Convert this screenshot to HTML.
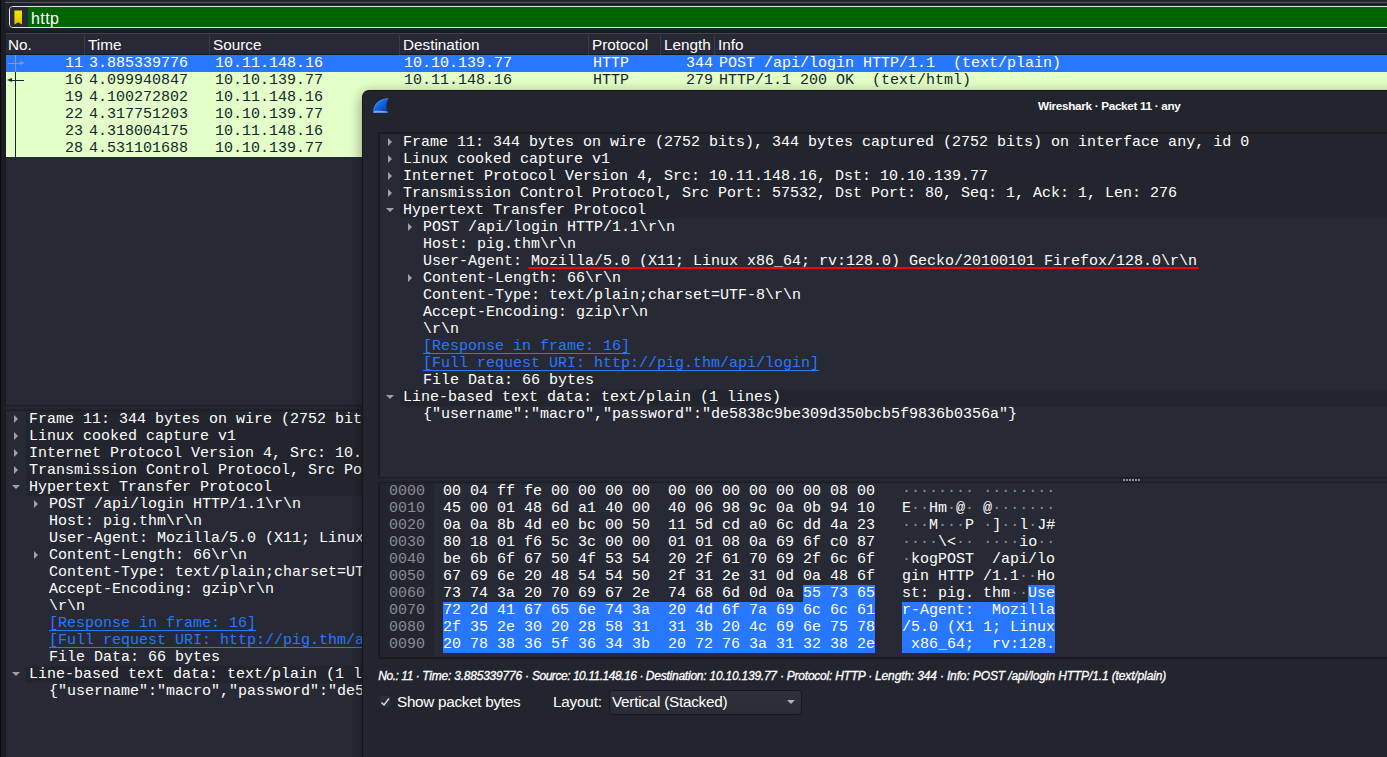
<!DOCTYPE html><html><head><meta charset="utf-8"><title>Wireshark</title><style>
*{box-sizing:border-box;margin:0;padding:0}
html,body{width:1387px;height:757px;overflow:hidden;background:#23252e;}
body{position:relative;font-family:"Liberation Sans",sans-serif;color:#fff;font-size:15px}
.abs{position:absolute}
.mono{font-family:"Liberation Mono",monospace;font-size:15px;line-height:17px;white-space:pre}
.row{position:absolute;left:0;right:0;height:17px}
.hdr span{position:absolute;top:0;line-height:21px;font-size:15.3px;color:#fff}
.sep{position:absolute;top:1px;width:1px;height:20px;background:#3a3c47}
.cell{position:absolute;top:0}
  .tri-r{position:absolute;width:0;height:0;border-left:4px solid #a0a1a7;border-top:4px solid transparent;border-bottom:4px solid transparent}
.tri-d{position:absolute;width:0;height:0;border-top:4.5px solid #a0a1a7;border-left:4px solid transparent;border-right:4px solid transparent}
.link{color:#2777ff;text-decoration:underline;text-decoration-skip-ink:none;text-underline-offset:3px;text-decoration-thickness:1px}
.dim{color:#8a8c95}
.hl{background:#2777ff}
</style></head><body>
<div class="abs" style="left:0;top:0;width:5px;height:757px;background:#1c1d24;border-left:1px solid #0a0a0d"></div>
<div class="abs" style="left:5px;top:28px;right:0;height:5px;background:linear-gradient(#1e2028,#191a21)"></div>
<div class="abs" style="left:5px;top:2px;right:0;height:1px;background:#52545d"></div>
<div class="abs" style="left:5px;top:3px;right:0;height:3px;background:#1f2129"></div>
<div class="abs" style="left:9px;top:6px;width:1400px;height:22px;border:1px solid #e4dfe2;border-radius:4px;background:#006400;overflow:hidden"><div class="abs" style="left:0;top:0;width:18px;height:20px;background:#272a34"></div><svg class="abs" style="left:4px;top:2.6px" width="9" height="15" viewBox="0 0 9 15"><defs><linearGradient id="bk" x1="0" y1="0" x2="0" y2="1"><stop offset="0" stop-color="#f7e400"/><stop offset="1" stop-color="#dcc400"/></linearGradient></defs><path d="M0.4 0.5H8V14.5L4.2 12.2L0.4 14.5Z" fill="url(#bk)"/></svg><span class="abs" style="left:21px;top:0.7px;line-height:21px;font-size:16px;letter-spacing:0.4px;color:#fff">http</span></div>
<div class="abs" style="left:5px;top:32px;right:-2px;height:374px;border:1px solid #1a1c23;background:#272a34"></div>
<div class="abs hdr" style="left:6px;top:33px;right:0;height:22px;background:#272a34;border-top:1px solid #40424c;border-bottom:1px solid #17181d">
<span style="left:2px">No.</span>
<span style="left:82px">Time</span>
<span style="left:207px">Source</span>
<span style="left:397px">Destination</span>
<span style="left:586px">Protocol</span>
<span style="left:658px">Length</span>
<span style="left:712px">Info</span>
<div class="sep" style="left:78px"></div>
<div class="sep" style="left:203px"></div>
<div class="sep" style="left:393px"></div>
<div class="sep" style="left:582px"></div>
<div class="sep" style="left:654px"></div>
<div class="sep" style="left:708px"></div>
</div>
<div class="row mono" style="left:6px;top:55px;background:#2777ff;color:#fff">
<span class="cell" style="left:59px;width:18px;text-align:right">11</span>
<span class="cell" style="left:83px">3.885339776</span>
<span class="cell" style="left:209px">10.11.148.16</span>
<span class="cell" style="left:398px">10.10.139.77</span>
<span class="cell" style="left:587px">HTTP</span>
<span class="cell" style="left:655px;width:52px;text-align:right">344</span>
<span class="cell" style="left:713px">POST /api/login HTTP/1.1  (text/plain)</span>
</div>
<div class="row mono" style="left:6px;top:72px;background:#e4ffc7;color:#12272e">
<span class="cell" style="left:59px;width:18px;text-align:right">16</span>
<span class="cell" style="left:83px">4.099940847</span>
<span class="cell" style="left:209px">10.10.139.77</span>
<span class="cell" style="left:398px">10.11.148.16</span>
<span class="cell" style="left:587px">HTTP</span>
<span class="cell" style="left:655px;width:52px;text-align:right">279</span>
<span class="cell" style="left:713px">HTTP/1.1 200 OK  (text/html)</span>
</div>
<div class="row mono" style="left:6px;top:89px;background:#e4ffc7;color:#12272e">
<span class="cell" style="left:59px;width:18px;text-align:right">19</span>
<span class="cell" style="left:83px">4.100272802</span>
<span class="cell" style="left:209px">10.11.148.16</span>
<span class="cell" style="left:398px">10.10.139.77</span>
<span class="cell" style="left:587px">HTTP</span>
<span class="cell" style="left:655px;width:52px;text-align:right">386</span>
<span class="cell" style="left:713px">GET /dashboard HTTP/1.1 </span>
</div>
<div class="row mono" style="left:6px;top:106px;background:#e4ffc7;color:#12272e">
<span class="cell" style="left:59px;width:18px;text-align:right">22</span>
<span class="cell" style="left:83px">4.317751203</span>
<span class="cell" style="left:209px">10.10.139.77</span>
<span class="cell" style="left:398px">10.11.148.16</span>
<span class="cell" style="left:587px">HTTP</span>
<span class="cell" style="left:655px;width:52px;text-align:right">1514</span>
<span class="cell" style="left:713px">HTTP/1.1 200 OK  (text/html)</span>
</div>
<div class="row mono" style="left:6px;top:123px;background:#e4ffc7;color:#12272e">
<span class="cell" style="left:59px;width:18px;text-align:right">23</span>
<span class="cell" style="left:83px">4.318004175</span>
<span class="cell" style="left:209px">10.11.148.16</span>
<span class="cell" style="left:398px">10.10.139.77</span>
<span class="cell" style="left:587px">HTTP</span>
<span class="cell" style="left:655px;width:52px;text-align:right">344</span>
<span class="cell" style="left:713px">GET /favicon.ico HTTP/1.1 </span>
</div>
<div class="row mono" style="left:6px;top:140px;background:#e4ffc7;color:#12272e">
<span class="cell" style="left:59px;width:18px;text-align:right">28</span>
<span class="cell" style="left:83px">4.531101688</span>
<span class="cell" style="left:209px">10.10.139.77</span>
<span class="cell" style="left:398px">10.11.148.16</span>
<span class="cell" style="left:587px">HTTP</span>
<span class="cell" style="left:655px;width:52px;text-align:right">552</span>
<span class="cell" style="left:713px">HTTP/1.1 404 Not Found  (text/html)</span>
</div>
<div class="abs" style="left:15px;top:55px;width:1px;height:17px;background:#8f96a3"></div>
<div class="abs" style="left:8px;top:63px;width:12px;height:1px;background:#8f96a3"></div>
<div class="tri-r" style="left:20px;top:61px;border-left-color:#8f96a3;border-top-width:2.5px;border-bottom-width:2.5px;border-left-width:5.5px"></div>
<div class="abs" style="left:15px;top:72px;width:1px;height:85px;background:#12272e"></div>
<div class="abs" style="left:11px;top:80px;width:13px;height:1px;background:#12272e"></div>
<div class="abs" style="left:7px;top:78px;width:0;height:0;border-right:5px solid #12272e;border-top:2.5px solid transparent;border-bottom:2.5px solid transparent"></div>
<div class="abs" style="left:5px;top:410px;right:-2px;height:360px;border:1px solid #1a1c23;background:#272a34"></div>
<div class="abs" style="left:6px;top:411px;width:1400px;height:289px;overflow:hidden">
<div class="abs" style="left:20px;top:0px;right:0;height:17px;background:#23252e"></div>
<div class="tri-r" style="left:8px;top:4px"></div>
<span class="abs mono" style="left:23px;top:0px">Frame 11: 344 bytes on wire (2752 bits), 344 bytes captured (2752 bits) on interface any, id 0</span>
<div class="abs" style="left:20px;top:17px;right:0;height:17px;background:#23252e"></div>
<div class="tri-r" style="left:8px;top:21px"></div>
<span class="abs mono" style="left:23px;top:17px">Linux cooked capture v1</span>
<div class="abs" style="left:20px;top:34px;right:0;height:17px;background:#23252e"></div>
<div class="tri-r" style="left:8px;top:38px"></div>
<span class="abs mono" style="left:23px;top:34px">Internet Protocol Version 4, Src: 10.11.148.16, Dst: 10.10.139.77</span>
<div class="abs" style="left:20px;top:51px;right:0;height:17px;background:#23252e"></div>
<div class="tri-r" style="left:8px;top:55px"></div>
<span class="abs mono" style="left:23px;top:51px">Transmission Control Protocol, Src Port: 57532, Dst Port: 80, Seq: 1, Ack: 1, Len: 276</span>
<div class="abs" style="left:20px;top:68px;right:0;height:17px;background:#23252e"></div>
<div class="tri-d" style="left:6px;top:74px"></div>
<span class="abs mono" style="left:23px;top:68px">Hypertext Transfer Protocol</span>
<div class="tri-r" style="left:28px;top:89px"></div>
<span class="abs mono" style="left:43px;top:85px">POST /api/login HTTP/1.1\r\n</span>
<span class="abs mono" style="left:43px;top:102px">Host: pig.thm\r\n</span>
<span class="abs mono" style="left:43px;top:119px">User-Agent: Mozilla/5.0 (X11; Linux x86_64; rv:128.0) Gecko/20100101 Firefox/128.0\r\n</span>
<div class="tri-r" style="left:28px;top:140px"></div>
<span class="abs mono" style="left:43px;top:136px">Content-Length: 66\r\n</span>
<span class="abs mono" style="left:43px;top:153px">Content-Type: text/plain;charset=UTF-8\r\n</span>
<span class="abs mono" style="left:43px;top:170px">Accept-Encoding: gzip\r\n</span>
<span class="abs mono" style="left:43px;top:187px">\r\n</span>
<span class="abs mono link" style="left:43px;top:204px">[Response in frame: 16]</span>
<span class="abs mono link" style="left:43px;top:221px">[Full request URI: http://pig.thm/api/login]</span>
<span class="abs mono" style="left:43px;top:238px">File Data: 66 bytes</span>
<div class="abs" style="left:20px;top:255px;right:0;height:17px;background:#23252e"></div>
<div class="tri-d" style="left:6px;top:261px"></div>
<span class="abs mono" style="left:23px;top:255px">Line-based text data: text/plain (1 lines)</span>
<span class="abs mono" style="left:43px;top:272px">{&quot;username&quot;:&quot;macro&quot;,&quot;password&quot;:&quot;de5838c9be309d350bcb5f9836b0356a&quot;}</span>
</div>
<div class="abs" style="left:362px;top:90px;width:1500px;height:700px;background:#23252e;border-radius:7px 7px 0 0;border-left:1px solid #14151b;border-top:1px solid #111217;box-shadow:0 3px 14px rgba(0,0,0,.4)">
</div>
<svg class="abs" style="left:373px;top:98px" width="16.6" height="15.3" viewBox="0 0 17 16" preserveAspectRatio="none"><defs><linearGradient id="fg" x1="0" y1="0" x2="1" y2="1"><stop offset="0" stop-color="#3a9aff"/><stop offset="0.45" stop-color="#1268e8"/><stop offset="1" stop-color="#0030a8"/></linearGradient></defs><path d="M0.2 15.4C0.6 6.5 5.5 1 16 0.3C13 5 13 10.5 15.2 15.4Z" fill="url(#fg)"/><path d="M0.4 14C1 6.8 5.8 1.4 15.6 0.6" fill="none" stroke="#6ab4ff" stroke-opacity="0.7" stroke-width="0.6"/><path d="M0.2 15.4L0.9 13.9C5 12.9 10 13.6 14.9 14L15.2 15.4Z" fill="#8ab6fa" fill-opacity="0.85"/></svg>
<span class="abs" style="left:1038px;top:97.5px;font-size:11.7px;font-weight:bold;line-height:16px;white-space:pre;letter-spacing:-0.3px">Wireshark · Packet 11 · any</span>
<div class="abs" style="left:378px;top:132px;width:1500px;height:346px;border:1px solid #1a1c23;border-width:2px 1px 1px 2px;background:#272a34"></div>
<div class="abs" style="left:380px;top:134px;width:1100px;height:289px;overflow:hidden">
<div class="abs" style="left:20px;top:0px;right:0;height:17px;background:#23252e"></div>
<div class="tri-r" style="left:8px;top:4px"></div>
<span class="abs mono" style="left:23px;top:0px">Frame 11: 344 bytes on wire (2752 bits), 344 bytes captured (2752 bits) on interface any, id 0</span>
<div class="abs" style="left:20px;top:17px;right:0;height:17px;background:#23252e"></div>
<div class="tri-r" style="left:8px;top:21px"></div>
<span class="abs mono" style="left:23px;top:17px">Linux cooked capture v1</span>
<div class="abs" style="left:20px;top:34px;right:0;height:17px;background:#23252e"></div>
<div class="tri-r" style="left:8px;top:38px"></div>
<span class="abs mono" style="left:23px;top:34px">Internet Protocol Version 4, Src: 10.11.148.16, Dst: 10.10.139.77</span>
<div class="abs" style="left:20px;top:51px;right:0;height:17px;background:#23252e"></div>
<div class="tri-r" style="left:8px;top:55px"></div>
<span class="abs mono" style="left:23px;top:51px">Transmission Control Protocol, Src Port: 57532, Dst Port: 80, Seq: 1, Ack: 1, Len: 276</span>
<div class="abs" style="left:20px;top:68px;right:0;height:17px;background:#23252e"></div>
<div class="tri-d" style="left:6px;top:74px"></div>
<span class="abs mono" style="left:23px;top:68px">Hypertext Transfer Protocol</span>
<div class="tri-r" style="left:28px;top:89px"></div>
<span class="abs mono" style="left:43px;top:85px">POST /api/login HTTP/1.1\r\n</span>
<span class="abs mono" style="left:43px;top:102px">Host: pig.thm\r\n</span>
<span class="abs mono" style="left:43px;top:119px">User-Agent: Mozilla/5.0 (X11; Linux x86_64; rv:128.0) Gecko/20100101 Firefox/128.0\r\n</span>
<div class="tri-r" style="left:28px;top:140px"></div>
<span class="abs mono" style="left:43px;top:136px">Content-Length: 66\r\n</span>
<span class="abs mono" style="left:43px;top:153px">Content-Type: text/plain;charset=UTF-8\r\n</span>
<span class="abs mono" style="left:43px;top:170px">Accept-Encoding: gzip\r\n</span>
<span class="abs mono" style="left:43px;top:187px">\r\n</span>
<span class="abs mono link" style="left:43px;top:204px">[Response in frame: 16]</span>
<span class="abs mono link" style="left:43px;top:221px">[Full request URI: http://pig.thm/api/login]</span>
<span class="abs mono" style="left:43px;top:238px">File Data: 66 bytes</span>
<div class="abs" style="left:20px;top:255px;right:0;height:17px;background:#23252e"></div>
<div class="tri-d" style="left:6px;top:261px"></div>
<span class="abs mono" style="left:23px;top:255px">Line-based text data: text/plain (1 lines)</span>
<span class="abs mono" style="left:43px;top:272px">{&quot;username&quot;:&quot;macro&quot;,&quot;password&quot;:&quot;de5838c9be309d350bcb5f9836b0356a&quot;}</span>
</div>
<div class="abs" style="left:528px;top:267px;width:671px;height:2px;background:#f00;border-radius:1px"></div>
<div class="abs" style="left:1123px;top:479px;width:17px;height:2px;background:repeating-linear-gradient(90deg,#8e9099 0 2px,transparent 2px 3px)"></div>
<div class="abs" style="left:378px;top:482px;width:1500px;height:177px;border:1px solid #1a1c23;border-width:1px 1px 2px 2px;background:#272a34"></div>
<div class="abs" style="left:380px;top:483px;width:54px;height:174px;background:#23252e"></div>
<div class="abs hl" style="left:803px;top:585px;width:72px;height:17px"></div>
<div class="abs hl" style="left:443px;top:602px;width:432px;height:51px"></div>
<div class="abs hl" style="left:1028px;top:585px;width:27px;height:17px"></div>
<div class="abs hl" style="left:902px;top:602px;width:153px;height:51px"></div>
<span class="abs mono dim" style="left:389px;top:483px">0000</span>
<span class="abs mono" style="left:443px;top:483px">00 04 ff fe 00 00 00 00  00 00 00 00 00 00 08 00</span>
<span class="abs mono" style="left:902px;top:483px"><span class="dim">·</span><span class="dim">·</span><span class="dim">·</span><span class="dim">·</span><span class="dim">·</span><span class="dim">·</span><span class="dim">·</span><span class="dim">·</span> <span class="dim">·</span><span class="dim">·</span><span class="dim">·</span><span class="dim">·</span><span class="dim">·</span><span class="dim">·</span><span class="dim">·</span><span class="dim">·</span></span>
<span class="abs mono dim" style="left:389px;top:500px">0010</span>
<span class="abs mono" style="left:443px;top:500px">45 00 01 48 6d a1 40 00  40 06 98 9c 0a 0b 94 10</span>
<span class="abs mono" style="left:902px;top:500px">E<span class="dim">·</span><span class="dim">·</span>Hm<span class="dim">·</span>@<span class="dim">·</span> @<span class="dim">·</span><span class="dim">·</span><span class="dim">·</span><span class="dim">·</span><span class="dim">·</span><span class="dim">·</span><span class="dim">·</span></span>
<span class="abs mono dim" style="left:389px;top:517px">0020</span>
<span class="abs mono" style="left:443px;top:517px">0a 0a 8b 4d e0 bc 00 50  11 5d cd a0 6c dd 4a 23</span>
<span class="abs mono" style="left:902px;top:517px"><span class="dim">·</span><span class="dim">·</span><span class="dim">·</span>M<span class="dim">·</span><span class="dim">·</span><span class="dim">·</span>P <span class="dim">·</span>]<span class="dim">·</span><span class="dim">·</span>l<span class="dim">·</span>J#</span>
<span class="abs mono dim" style="left:389px;top:534px">0030</span>
<span class="abs mono" style="left:443px;top:534px">80 18 01 f6 5c 3c 00 00  01 01 08 0a 69 6f c0 87</span>
<span class="abs mono" style="left:902px;top:534px"><span class="dim">·</span><span class="dim">·</span><span class="dim">·</span><span class="dim">·</span>\&lt;<span class="dim">·</span><span class="dim">·</span> <span class="dim">·</span><span class="dim">·</span><span class="dim">·</span><span class="dim">·</span>io<span class="dim">·</span><span class="dim">·</span></span>
<span class="abs mono dim" style="left:389px;top:551px">0040</span>
<span class="abs mono" style="left:443px;top:551px">be 6b 6f 67 50 4f 53 54  20 2f 61 70 69 2f 6c 6f</span>
<span class="abs mono" style="left:902px;top:551px"><span class="dim">·</span>kogPOST  /api/lo</span>
<span class="abs mono dim" style="left:389px;top:568px">0050</span>
<span class="abs mono" style="left:443px;top:568px">67 69 6e 20 48 54 54 50  2f 31 2e 31 0d 0a 48 6f</span>
<span class="abs mono" style="left:902px;top:568px">gin HTTP /1.1<span class="dim">·</span><span class="dim">·</span>Ho</span>
<span class="abs mono dim" style="left:389px;top:585px">0060</span>
<span class="abs mono" style="left:443px;top:585px">73 74 3a 20 70 69 67 2e  74 68 6d 0d 0a 55 73 65</span>
<span class="abs mono" style="left:902px;top:585px">st: pig. thm<span class="dim">·</span><span class="dim">·</span>Use</span>
<span class="abs mono dim" style="left:389px;top:602px">0070</span>
<span class="abs mono" style="left:443px;top:602px">72 2d 41 67 65 6e 74 3a  20 4d 6f 7a 69 6c 6c 61</span>
<span class="abs mono" style="left:902px;top:602px">r-Agent:  Mozilla</span>
<span class="abs mono dim" style="left:389px;top:619px">0080</span>
<span class="abs mono" style="left:443px;top:619px">2f 35 2e 30 20 28 58 31  31 3b 20 4c 69 6e 75 78</span>
<span class="abs mono" style="left:902px;top:619px">/5.0 (X1 1; Linux</span>
<span class="abs mono dim" style="left:389px;top:636px">0090</span>
<span class="abs mono" style="left:443px;top:636px">20 78 38 36 5f 36 34 3b  20 72 76 3a 31 32 38 2e</span>
<span class="abs mono" style="left:902px;top:636px"> x86_64;  rv:128.</span>
<div class="abs" style="left:0;top:667.7px;font-size:12px;font-style:italic;line-height:16px;white-space:pre;-webkit-text-stroke:0.3px #fff">
<span class="abs" style="left:378.2px;top:0;letter-spacing:-0.437px">No.: 11 · </span>
<span class="abs" style="left:422.3px;top:0;letter-spacing:-0.218px">Time: 3.885339776 · </span>
<span class="abs" style="left:531.9000000000001px;top:0;letter-spacing:-0.462px">Source: 10.11.148.16 · </span>
<span class="abs" style="left:645.8000000000001px;top:0;letter-spacing:-0.23px">Destination: 10.10.139.77 · </span>
<span class="abs" style="left:786.8000000000001px;top:0;letter-spacing:-0.232px">Protocol: HTTP · </span>
<span class="abs" style="left:875.1px;top:0;letter-spacing:-0.162px">Length: 344 · </span>
<span class="abs" style="left:946.9000000000001px;top:0;letter-spacing:-0.128px">Info: POST /api/login HTTP/1.1 (text/plain)</span>
</div>
<div class="abs" style="left:379px;top:695px;width:13px;height:13px;background:#2a2c37;border:1px solid #20222a;border-radius:2px"></div>
<svg class="abs" style="left:380px;top:697px" width="11" height="10" viewBox="0 0 11 10"><path d="M1.5 5.5L4 8L9 1.5" fill="none" stroke="#e0e0e0" stroke-width="1.4"/></svg>
<span class="abs" style="left:397px;top:693px;font-size:15.3px;line-height:18px;letter-spacing:-0.3px">Show packet bytes</span>
<span class="abs" style="left:553px;top:693px;font-size:15.3px;line-height:18px;letter-spacing:-0.2px">Layout:</span>
<div class="abs" style="left:609px;top:690px;width:193px;height:25px;border:1px solid #16171c;border-radius:4px;background:linear-gradient(#2d2f3b,#292b36)"><span class="abs" style="left:2px;top:2px;font-size:15.3px;line-height:18px;letter-spacing:-0.25px">Vertical (Stacked)</span><div class="tri-d" style="left:177px;top:9px;border-top-color:#b0b2ba;border-top-width:4px"></div></div>
</body></html>
